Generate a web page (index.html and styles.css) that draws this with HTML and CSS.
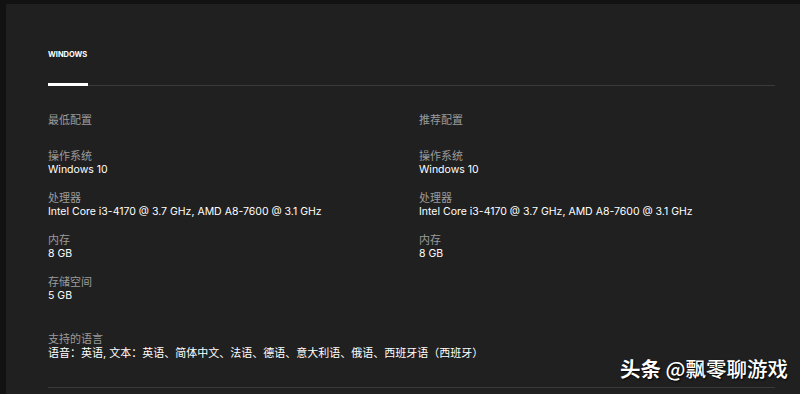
FILE: index.html
```html
<!DOCTYPE html>
<html lang="zh">
<head>
<meta charset="utf-8">
<link rel="stylesheet" href="styles.css">
</head>
<body>
<div class="page">
  <section class="panel">
    <nav class="tabs">
      <div class="tab active">WINDOWS</div>
    </nav>
    <div class="specs">
      <div class="col">
        <div class="col-title">最低配置</div>
        <div class="item"><div class="label">操作系统</div><div class="value">Windows 10</div></div>
        <div class="item"><div class="label">处理器</div><div class="value">Intel Core i3-4170 @ 3.7 GHz, AMD A8-7600 @ 3.1 GHz</div></div>
        <div class="item"><div class="label">内存</div><div class="value">8 GB</div></div>
        <div class="item"><div class="label">存储空间</div><div class="value">5 GB</div></div>
      </div>
      <div class="col">
        <div class="col-title">推荐配置</div>
        <div class="item"><div class="label">操作系统</div><div class="value">Windows 10</div></div>
        <div class="item"><div class="label">处理器</div><div class="value">Intel Core i3-4170 @ 3.7 GHz, AMD A8-7600 @ 3.1 GHz</div></div>
        <div class="item"><div class="label">内存</div><div class="value">8 GB</div></div>
      </div>
    </div>
    <div class="langs">
      <div class="label">支持的语言</div>
      <div class="value lang-value">语音：英语, 文本：英语、简体中文、法语、德语、意大利语、俄语、西班牙语（西班牙）</div>
    </div>
    <div class="bottom-rule"></div>
  </section>
  <div class="watermark"><span class="wm-brand">头条</span> @飘零聊游戏</div>
</div>
</body>
</html>
```

FILE: styles.css
```css
html, body {
  margin: 0;
  padding: 0;
  background: #121212;
  width: 800px;
  height: 394px;
  overflow: hidden;
}
body {
  font-family: "Inter", "Noto Sans CJK SC", sans-serif;
  -webkit-font-smoothing: antialiased;
}
.page {
  position: relative;
  padding: 4px 0 0 6px;
  height: 390px;
}
.panel {
  background: #202020;
  height: 390px;
  padding: 0 25px 0 42px;
  box-sizing: border-box;
}
.tabs {
  padding-top: 45px;
  border-bottom: 1px solid #3a3a3a;
  display: flex;
}
.tab {
  font-size: 7.5px;
  font-weight: 700;
  letter-spacing: 0;
  color: #ffffff;
  line-height: 12px;
  width: 40px;
  padding-bottom: 22px;
  border-bottom: 3px solid #ffffff;
  margin-bottom: -1px;
}
.specs {
  display: grid;
  grid-template-columns: 371px 1fr;
  padding-top: 27px;
}
.col-title {
  font-size: 11px;
  line-height: 14px;
  color: #9b9b9b;
  margin-bottom: 22px;
}
.item {
  margin-bottom: 14px;
}
.label {
  font-size: 11px;
  line-height: 14px;
  color: #9b9b9b;
}
.value {
  font-size: 10.5px;
  line-height: 14px;
  color: #ffffff;
}
.lang-value {
  font-size: 11px;
}
.langs {
  padding-top: 15px;
}
.bottom-rule {
  margin-top: 27px;
  border-top: 1px solid #3a3a3a;
}
.watermark {
  position: absolute;
  left: 620px;
  top: 356px;
  font-size: 20.5px;
  line-height: 24px;
  font-family: "Noto Sans CJK SC", sans-serif;
  font-weight: 500;
  color: #ffffff;
  text-shadow: 1px 1px 2px #000;
}
.wm-brand {
  font-weight: 700;
}
```
